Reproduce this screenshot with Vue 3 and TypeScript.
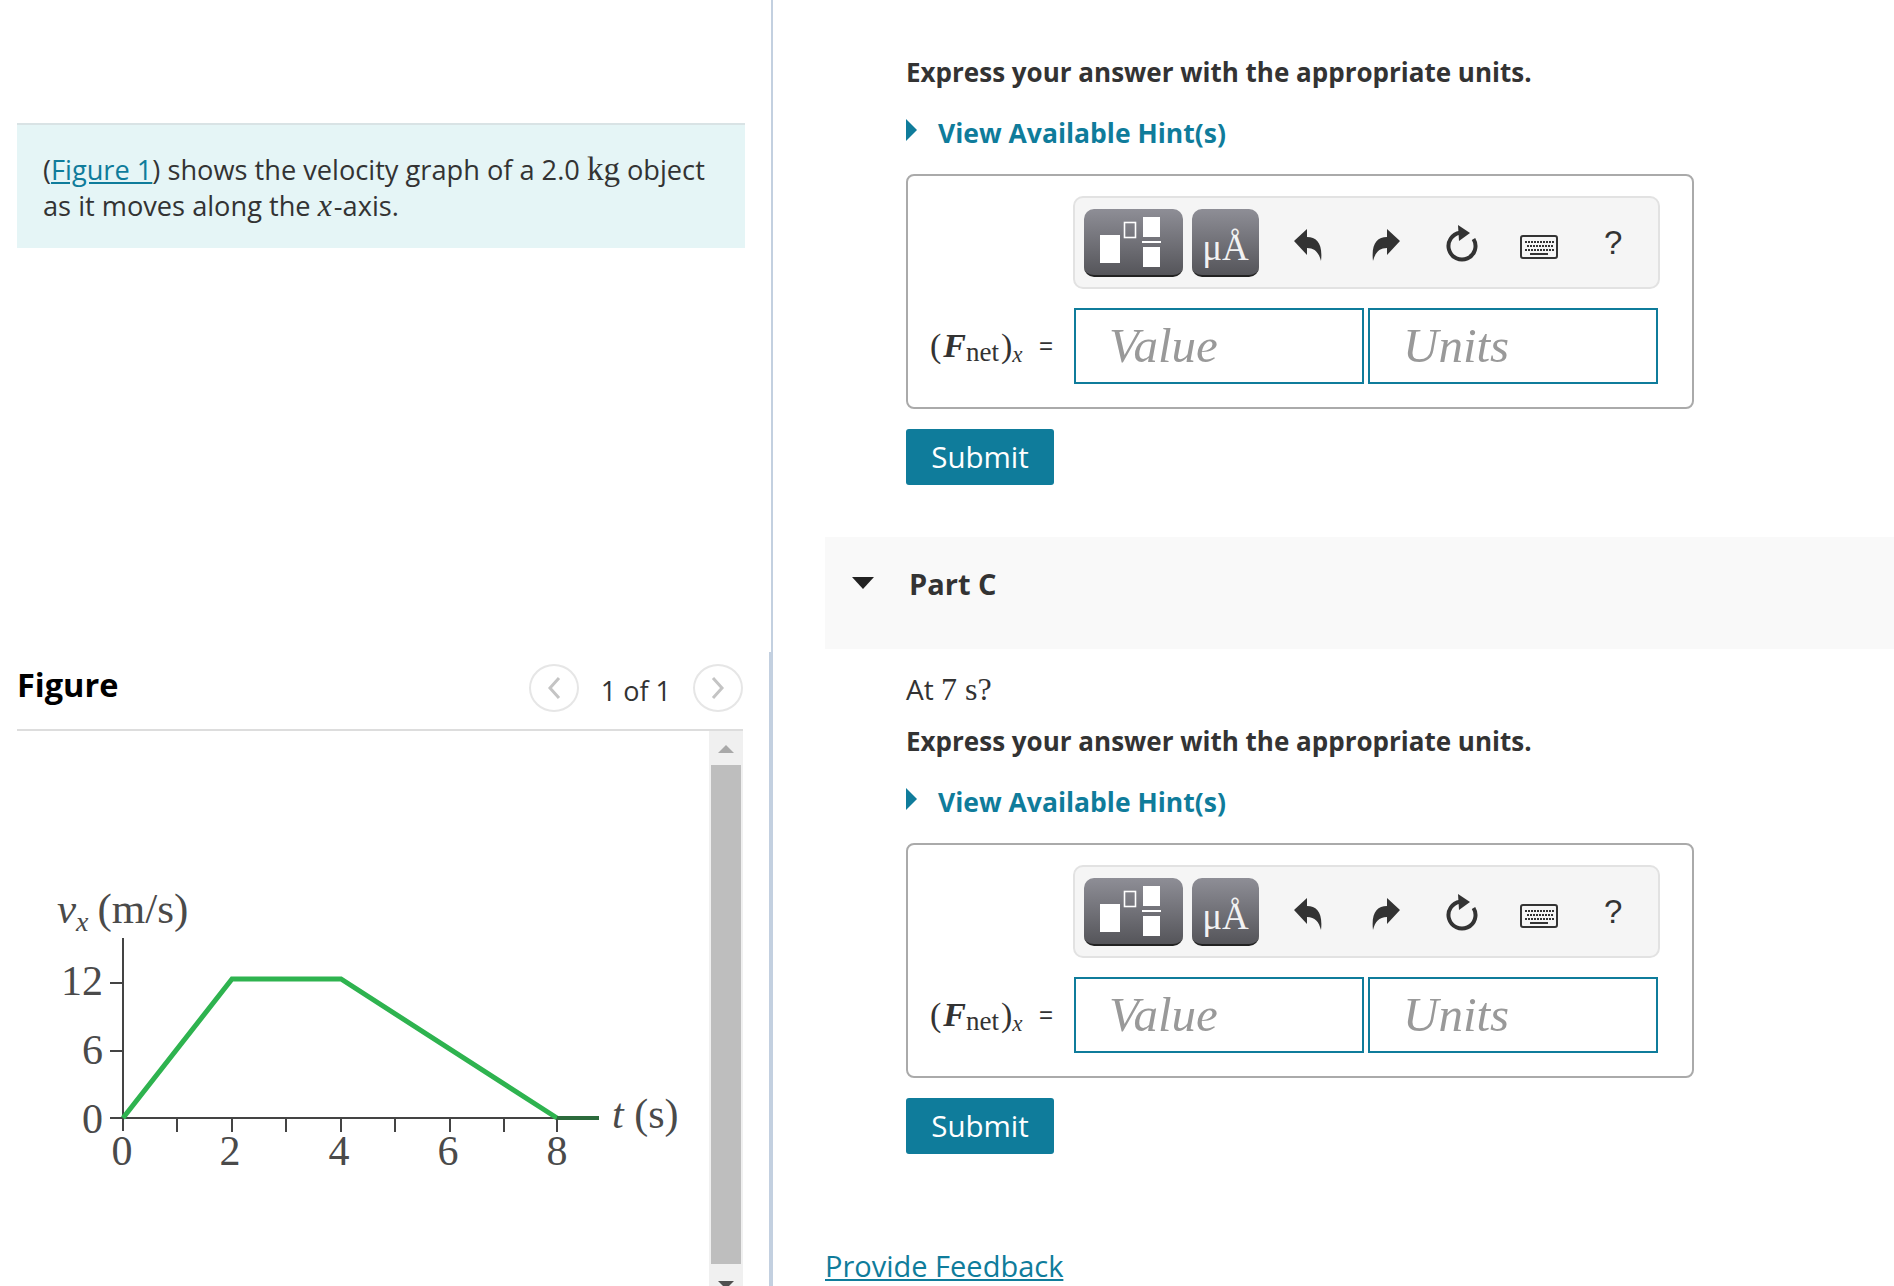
<script setup lang="ts">
const parts = [
  { id: 'b', title: '', question: false },
  { id: 'c', title: 'Part C', question: true },
]
const xTicks = [177, 286, 395, 504]
const xLabels = [
  { x: 122, text: '0' },
  { x: 230, text: '2' },
  { x: 339, text: '4' },
  { x: 448, text: '6' },
  { x: 557, text: '8' },
]
const keyRows = [
  { y: 6, xs: [5, 8, 11, 14, 17, 20, 23, 26, 29, 32] },
  { y: 10, xs: [7, 10, 13, 16, 19, 22, 25, 28, 31] },
  { y: 14, xs: [5, 8, 11, 14, 17, 20, 23, 26, 29, 32] },
]
</script>

<template>
  <div class="page">
    <aside class="left">
      <div class="intro">
        <p>
          (<a class="link" href="#">Figure 1</a>) shows the velocity graph of a 2.0 <span class="kg">kg</span> object
          as it moves along the <i class="mathx">x</i>-axis.
        </p>
      </div>

      <header class="fig-head">
        <h2>Figure</h2>
        <div class="pager">
          <span class="circle">
            <svg width="14" height="24" viewBox="0 0 14 24"><path d="M12 2 3 12l9 10" /></svg>
          </span>
          <span class="count">1 of 1</span>
          <span class="circle">
            <svg width="14" height="24" viewBox="0 0 14 24"><path d="M2 2l9 10-9 10" /></svg>
          </span>
        </div>
      </header>

      <div class="fig-body">
        <svg class="graph" viewBox="17 730 692 555" width="692" height="555">
          <g class="labels">
            <text class="unit-label" x="57" y="922"><tspan font-style="italic">v</tspan><tspan dy="8" font-size="28" font-style="italic">x</tspan><tspan dy="-8" dx="9">(m/s)</tspan></text>
            <text x="103" y="994" text-anchor="end">12</text>
            <text x="103" y="1063" text-anchor="end">6</text>
            <text x="103" y="1132" text-anchor="end">0</text>
            <text v-for="l in xLabels" :key="l.text" :x="l.x" y="1164" text-anchor="middle">{{ l.text }}</text>
            <text x="612" y="1127"><tspan font-style="italic">t</tspan> (s)</text>
          </g>
          <g class="axes">
            <path d="M123 937V1130M110 1117H599M110 982H123M110 1050H123" />
            <path v-for="x in xTicks" :key="x" :d="`M${x} 1117v14`" />
            <path d="M232 1117v14M341 1117v14M450 1117v14M557 1117v14" />
          </g>
          <path class="curve" d="M123 1117 232 978H341L557 1117" />
          <path class="tail" d="M557 1117H599" />
        </svg>
        <div class="scrollbar">
          <div class="sb-btn"><span class="arrow up"></span></div>
          <div class="thumb"></div>
          <div class="sb-btn end"><span class="arrow down"></span></div>
        </div>
      </div>
    </aside>

    <div class="divider">
      <div class="thin"></div>
      <div class="thick"></div>
    </div>

    <main class="right">
      <section v-for="part in parts" :key="part.id">
        <div v-if="part.title" class="part-head">
          <span class="caret"></span>
          <h3>{{ part.title }}</h3>
        </div>
        <div class="part-body" :class="{ first: !part.question }">
          <p v-if="part.question" class="question">At <span class="serif">7 s?</span></p>
          <p class="express">Express your answer with the appropriate units.</p>
          <a class="hint" href="#"><span class="hint-caret"></span>View Available Hint(s)</a>

          <div class="answer">
            <div class="toolbar">
              <button class="tool tool-tpl" type="button" aria-label="Templates">
                <svg width="99" height="68" viewBox="0 0 99 68">
                  <rect x="16" y="26" width="20" height="28" fill="#fff" />
                  <rect x="40.5" y="13.5" width="11" height="15" fill="none" stroke="#fff" stroke-width="1.6" />
                  <rect x="59" y="8" width="17" height="20" fill="#fff" />
                  <rect x="58" y="32" width="19" height="2" fill="#fff" />
                  <rect x="59" y="38" width="17" height="20" fill="#fff" />
                </svg>
              </button>
              <button class="tool tool-unit" type="button">μÅ</button>
              <svg class="ico undo" width="28" height="32" viewBox="0 0 28 32">
                <path d="M0 12 13 0v8c10 0 16 7 14 24-2-8-6-13-14-13v7z" />
              </svg>
              <svg class="ico redo" width="28" height="32" viewBox="0 0 28 32">
                <path d="M28 12 15 0v8C5 8-1 15 1 32c2-8 6-13 14-13v7z" />
              </svg>
              <svg class="ico reset" width="34" height="38" viewBox="0 0 34 38">
                <path d="M28.5 15A13.5 13.5 0 1 1 15 8.7" fill="none" stroke="#333" stroke-width="4" />
                <path d="M13 1 25 9 14 17z" />
              </svg>
              <svg class="ico keys" width="38" height="24" viewBox="0 0 38 24">
                <rect x="1" y="1" width="36" height="22" rx="2" fill="#f5f5f5" stroke="#333" stroke-width="2" />
                <g v-for="row in keyRows" :key="row.y">
                  <rect v-for="x in row.xs" :key="x" :x="x" :y="row.y" width="2" height="2" fill="#333" />
                </g>
                <rect x="10" y="18" width="18" height="2" fill="#333" />
              </svg>
              <span class="help">?</span>
            </div>

            <div class="row">
              <span class="math">(<b>F</b><sub>net</sub><span class="close">)</span><sub class="x">x</sub></span>
              <span class="eq">=</span>
              <input class="field" placeholder="Value" />
              <input class="field" placeholder="Units" />
            </div>
          </div>

          <button class="submit" type="button">Submit</button>
        </div>
      </section>
      <a class="feedback link" href="#">Provide Feedback</a>
    </main>
  </div>
</template>

<style>
html,
body {
  margin: 0;
  overflow: hidden;
}
</style>

<style scoped>
.page {
  display: flex;
  width: 1894px;
  height: 1286px;
  overflow: hidden;
  background: #fff;
  font-family: "Open Sans", sans-serif;
  font-size: 27.2px;
  line-height: 36px;
  color: #333;
}

.link {
  color: #0f7c9b;
  text-decoration: underline;
}

/* left column */
.left {
  display: flex;
  flex-direction: column;
  width: 769px;
  padding: 123px 0 0 17px;
  box-sizing: border-box;
}
.intro {
  width: 728px;
  box-sizing: border-box;
  padding: 27px 20px 24px 26px;
  background: #e5f5f6;
  border-top: 2px solid #d9e3e5;
}
.intro p {
  margin: 0;
}
.kg {
  font-family: "Liberation Serif", serif;
  font-size: 33px;
  line-height: 0;
}
.mathx {
  font-family: "Liberation Serif", serif;
  font-size: 32px;
  line-height: 0;
  margin-right: 2px;
}
.fig-head {
  display: flex;
  justify-content: space-between;
  align-items: center;
  width: 726px;
  height: 48px;
  margin-top: 416px;
  padding-bottom: 17px;
  border-bottom: 2px solid #ddd;
}
.fig-head h2 {
  margin: -7px 0 0;
  font-size: 32.5px;
  font-weight: 700;
  color: #000;
}
.pager {
  display: flex;
  align-items: center;
  gap: 22px;
}
.circle {
  display: flex;
  align-items: center;
  justify-content: center;
  width: 46px;
  height: 44px;
  border: 2px solid #e6e6e6;
  border-radius: 50%;
}
.circle path {
  fill: none;
  stroke: #c4c4c4;
  stroke-width: 3;
}
.count {
  font-size: 27px;
  padding-top: 6px;
}
.fig-body {
  flex: 1;
  display: flex;
  width: 726px;
}
.graph {
  display: block;
  flex: none;
}
.labels text {
  font-family: "Liberation Serif", serif;
  font-size: 42px;
  fill: #4a4a4a;
}
.labels .unit-label {
  font-size: 43px;
}
.axes path {
  stroke: #444;
  stroke-width: 2;
  fill: none;
}
.curve {
  fill: none;
  stroke: #2eb34f;
  stroke-width: 5;
}
.tail {
  fill: none;
  stroke: #2c6b3c;
  stroke-width: 4;
}
.scrollbar {
  display: flex;
  flex-direction: column;
  width: 34px;
  background: #f0f0f0;
}
.sb-btn {
  height: 34px;
  display: flex;
  justify-content: center;
  padding-top: 14px;
  box-sizing: border-box;
}
.sb-btn.end {
  height: 22px;
  padding-top: 17px;
}
.thumb {
  flex: 1;
  margin: 0 2px;
  background: #bebebe;
}
.arrow {
  width: 0;
  height: 0;
  border-left: 8px solid transparent;
  border-right: 8px solid transparent;
}
.arrow.up {
  border-bottom: 8px solid #a9a9a9;
}
.arrow.down {
  border-top: 8px solid #505050;
}

.divider {
  display: flex;
  flex-direction: column;
  align-items: flex-end;
  width: 4px;
  flex: none;
}
.thin {
  width: 2px;
  height: 652px;
  background: #c3d0e0;
}
.thick {
  width: 4px;
  flex: 1;
  background: #c3d0e0;
}

/* right column */
.right {
  flex: 1;
  padding-left: 52px;
  min-width: 0;
}
.part-head {
  display: flex;
  align-items: flex-start;
  height: 112px;
  margin-top: 52px;
  padding: 29px 0 0 27px;
  box-sizing: border-box;
  background: #f9f9f9;
}
.part-head h3 {
  margin: 0 0 0 35px;
  font-size: 29px;
  line-height: 36px;
  font-weight: 700;
}
.caret {
  width: 0;
  height: 0;
  margin-top: 11px;
  border-left: 11px solid transparent;
  border-right: 11px solid transparent;
  border-top: 12px solid #222;
}
.part-body {
  margin-left: 81px;
  width: 788px;
  padding-top: 22px;
}
.part-body.first {
  padding-top: 54px;
}
.question {
  margin: 0 0 16px;
  font-size: 28px;
}
.serif {
  font-family: "Liberation Serif", serif;
  font-size: 32px;
  line-height: 0;
}
.express {
  margin: 0;
  font-size: 26px;
  font-weight: 700;
}
.hint {
  display: flex;
  align-items: center;
  margin-top: 25px;
  font-size: 26.5px;
  font-weight: 700;
  color: #0f7c9b;
  text-decoration: none;
}
.hint-caret {
  width: 0;
  height: 0;
  margin: -6px 21px 0 0;
  border-top: 11px solid transparent;
  border-bottom: 11px solid transparent;
  border-left: 11px solid #0f7c9b;
}
.answer {
  margin-top: 23px;
  height: 235px;
  box-sizing: border-box;
  padding: 20px 32px 0 165px;
  border: 2px solid #aaa;
  border-radius: 8px;
}
.toolbar {
  display: flex;
  align-items: center;
  width: 587px;
  height: 93px;
  box-sizing: border-box;
  padding-left: 9px;
  background: #f5f5f5;
  border: 2px solid #e2e2e2;
  border-radius: 10px;
}
.tool {
  height: 68px;
  padding: 0;
  border: 0;
  border-bottom: 2px solid #222;
  border-radius: 10px;
  background: linear-gradient(#8e8e96, #55555a);
  display: block;
  flex: none;
}
.tool-tpl {
  width: 99px;
}
.tool-tpl svg {
  display: block;
}
.tool-unit {
  width: 67px;
  margin-left: 9px;
  font-family: "Liberation Serif", serif;
  font-size: 37px;
  color: #f2f2f2;
  padding-top: 12px;
}
.ico {
  display: block;
  flex: none;
  fill: #333;
}
.undo {
  margin-left: 35px;
  margin-top: 4px;
}
.redo {
  margin-left: 50px;
  margin-top: 4px;
}
.reset {
  margin-left: 45px;
  margin-top: 1px;
}
.keys {
  margin-left: 41px;
  margin-top: 8px;
}
.help {
  margin-left: 46px;
  font-family: "Liberation Sans", sans-serif;
  font-size: 33px;
  color: #333;
}
.row {
  display: flex;
  align-items: center;
  margin: 19px -10px 0 -145px;
}
.math {
  flex: none;
  width: 98px;
  margin-left: 2px;
  font-family: "Liberation Serif", serif;
  font-size: 34px;
  color: #333;
}
.math b {
  font-style: italic;
  margin-left: 2px;
}
.math sub {
  font-size: 27px;
  line-height: 0;
  vertical-align: -4px;
}
.math .close {
  margin-left: 2px;
}
.math sub.x {
  font-style: italic;
  font-size: 23px;
  vertical-align: -5px;
}
.eq {
  flex: none;
  width: 20px;
  margin: 0 15px 0 11px;
  font-family: "Liberation Sans", sans-serif;
  font-size: 24px;
}
.field {
  flex: none;
  width: 290px;
  height: 76px;
  box-sizing: border-box;
  padding: 0 0 2px 33px;
  margin-right: 4px;
  border: 2px solid #0f7c9b;
  border-radius: 0;
  outline: 0;
  font-family: "Liberation Serif", serif;
  font-style: italic;
  font-size: 49px;
  background: #fff;
}
.field::placeholder {
  color: #999;
  opacity: 1;
}
.submit {
  display: block;
  margin-top: 20px;
  width: 148px;
  height: 56px;
  padding: 0 0 2px;
  border: 0;
  border-radius: 3px;
  background: #0f7c9b;
  color: #fff;
  font-family: inherit;
  font-size: 29.5px;
}
.feedback {
  display: inline-block;
  margin-top: 94px;
  font-size: 29px;
}
</style>
